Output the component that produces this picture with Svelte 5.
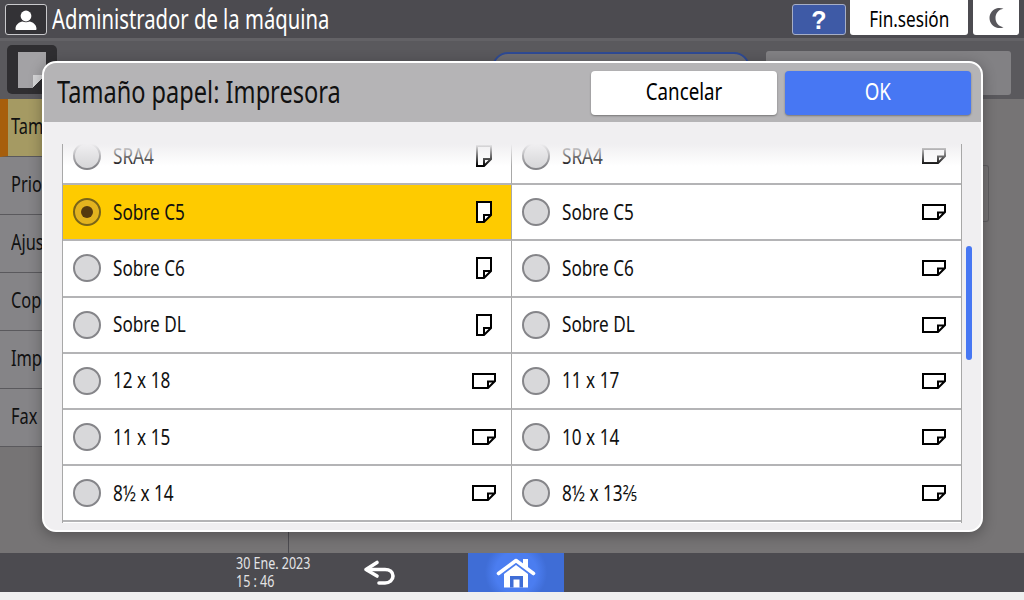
<script>
  const tabs = [
    { label: 'Tamaño papel', on: true },
    { label: 'Prioridad' },
    { label: 'Ajustes' },
    { label: 'Copiadora' },
    { label: 'Impresora' },
    { label: 'Fax' }
  ];

  // left / right columns of the paper size list, row by row
  const rows = [
    ['SRA4', 'SRA4'],
    ['Sobre C5', 'Sobre C5'],
    ['Sobre C6', 'Sobre C6'],
    ['Sobre DL', 'Sobre DL'],
    ['12 x 18', '11 x 17'],
    ['11 x 15', '10 x 14'],
    ['8½ x 14', '8½ x 13⅖']
  ];

  const isWide = (label) => !label.startsWith('S');
</script>

<div class="screen">
  <header class="topbar">
    <span class="user">
      <svg width="26" height="24" viewBox="0 0 26 24">
        <circle cx="13" cy="8" r="5.4" fill="#fff" />
        <path d="M2.5 21c0-4.6 4-7 7-7.4 1.800 1 5.200 1 7 0 3 .4 7 2.800 7 7.400 0 .6-.4 1-1 1h-19c-.6 0-1-.4-1-1z" fill="#fff" />
      </svg>
    </span>
    <span class="who nar">Administrador de la máquina</span>
    <span class="grow"></span>
    <button class="help">?</button>
    <button class="logout"><span class="nar mid">Fin.sesión</span></button>
    <button class="night" aria-label="Modo noche">
      <svg width="18" height="22" viewBox="0 0 18 22">
        <path d="M11 1C6 2 2.500 6 2.500 11S6 20 11 21c2 .3 4 0 5.500-.8C11.500 19.500 8.500 15.500 8.500 11S11.500 2.500 16.500 1.800C15 1 13 .7 11 1z" fill="#58575c" />
      </svg>
    </button>
  </header>

  <main class="content">
    <div class="title-row">
      <span class="tile"><span class="sheet"></span></span>
      <span class="title nar">Ajustes de papel bandeja</span>
      <span class="grow"></span>
      <span class="pill"><i></i><span class="nar">Comprobar estado</span></span>
      <span class="action"><span class="nar mid">Ajustes de bandeja</span></span>
    </div>
    <div class="columns">
      <nav class="tabs">
        {#each tabs as tab}
          <div class="tab" class:on={tab.on}><span class="nar">{tab.label}</span></div>
        {/each}
      </nav>
      <div class="pane"><span class="knob"></span></div>
    </div>

    <section class="dialog">
      <div class="dialog-head">
        <h1><span class="nar">Tamaño papel: Impresora</span></h1>
        <button class="cancel"><span class="nar mid">Cancelar</span></button>
        <button class="ok"><span class="nar mid">OK</span></button>
      </div>
      <div class="dialog-body">
        <div class="list">
          <div class="grid">
            {#each rows as row, r}
              {#each row as label, c}
                <div class="row" class:picked={r === 1 && c === 0}>
                  <span class="radio"></span>
                  <span class="label"><span class="nar">{label}</span></span>
                  {#if c === 1 || isWide(label)}
                    <svg class="paper" width="26" height="18" viewBox="0 0 26 18">
                      <path d="M2 2h22v7l-7 7H2z M17 16V9.500h7" fill="#fff" stroke="#000" stroke-width="2" />
                    </svg>
                  {:else}
                    <svg class="paper tall" width="18" height="24" viewBox="0 0 18 24">
                      <path d="M2 2h14v13l-7 7H2z M9 22v-7h7" fill="#fff" stroke="#000" stroke-width="2" />
                    </svg>
                  {/if}
                </div>
              {/each}
            {/each}
          </div>
          <span class="fade"></span>
        </div>
        <div class="track"><span class="thumb"></span></div>
      </div>
    </section>
  </main>

  <footer class="bottombar">
    <div class="clock"><span class="nar">30 Ene. 2023</span><br /><span class="nar">15 : 46</span></div>
    <svg class="back" width="34" height="26" viewBox="0 0 34 26">
      <path d="M14 2.500 3 9.500l11 6.500" fill="none" stroke="#fff" stroke-width="3.600" stroke-linejoin="round" stroke-linecap="round" />
      <path d="M4 9.500h18c4.500 0 8 2.500 8 6.500s-3.500 7-8 7h-6" fill="none" stroke="#fff" stroke-width="3.600" stroke-linecap="round" />
    </svg>
    <div class="home">
      <svg width="40" height="32" viewBox="0 0 40 32">
        <path d="M27 2h5v9h-5z" fill="#fff" />
        <path d="M2.500 16.500 20 3.500l17.500 13" fill="none" stroke="#fff" stroke-width="3.600" stroke-linejoin="round" stroke-linecap="round" />
        <path d="M8 17 20 8l12 9v13.500H8z" fill="#fff" />
        <path d="M14 19h13v11.500h-3.500v-8h-6v8H14z" fill="#3f6dd6" />
      </svg>
    </div>
  </footer>
  <div class="strip"></div>
</div>

<style>
  :global(body) {
    margin: 0;
    background: #efefef;
  }

  .screen {
    width: 1024px;
    height: 600px;
    display: flex;
    flex-direction: column;
    overflow: hidden;
    font-family: "Noto Sans", "Open Sans", sans-serif;
    color: #000;
  }

  button {
    font: inherit;
    border: 0;
    padding: 0;
  }

  /* the device font is a condensed one, none is installed */
  .nar {
    display: inline-block;
    transform: scaleX(0.78);
    transform-origin: left center;
    white-space: nowrap;
  }

  .nar.mid {
    transform-origin: center;
  }

  .grow {
    flex: 1;
  }

  .topbar {
    height: 38px;
    flex: none;
    display: flex;
    align-items: flex-start;
    padding: 0 5px 0 5px;
    background: #4c4b50;
    border-bottom: 3px solid #636266;
  }

  .user {
    width: 40px;
    height: 29px;
    margin-top: 4px;
    display: flex;
    align-items: center;
    justify-content: center;
    background: #333236;
    border: 1px solid #c9c9cc;
    border-radius: 3px;
  }

  .who {
    margin: 3px 0 0 5px;
    font-size: 27px;
    line-height: 32px;
    color: #fff;
    transform: scaleX(0.75);
  }

  .help {
    width: 54px;
    height: 31px;
    margin-top: 4px;
    background: #3e5aa6;
    border: 1px solid #a6aec6;
    border-radius: 3px;
    color: #fff;
    font-family: "Liberation Sans", sans-serif;
    font-size: 25px;
    font-weight: 700;
    line-height: 26px;
  }

  .logout {
    width: 118px;
    height: 35px;
    margin-left: 4px;
    background: #fff;
    border-radius: 0 0 3px 3px;
    font-size: 22px;
  }

  .night {
    width: 46px;
    height: 35px;
    margin-left: 5px;
    background: #fff;
    border-radius: 0 0 3px 3px;
    display: flex;
    align-items: center;
    justify-content: center;
  }

  .content {
    position: relative;
    flex: 1;
    min-height: 0;
    display: flex;
    flex-direction: column;
    background: #767475;
  }

  .title-row {
    height: 58px;
    flex: none;
    display: flex;
    align-items: flex-start;
    padding: 4px 13px 0 7px;
    background: #5a595d;
    box-sizing: border-box;
  }

  .tile {
    width: 50px;
    height: 49px;
    display: flex;
    align-items: flex-start;
    justify-content: center;
    background: #2f2e31;
    border-radius: 5px;
  }

  .sheet {
    position: relative;
    width: 28px;
    height: 36px;
    margin-top: 7px;
    background: #a3a2a5;
  }

  .sheet::after {
    content: '';
    position: absolute;
    right: 0;
    bottom: 0;
    width: 13px;
    height: 13px;
    background: linear-gradient(135deg, #d5d5d7 50%, #2f2e31 50%);
  }

  .title {
    margin: 10px 0 0 9px;
    font-size: 21px;
    color: #111;
  }

  .pill {
    width: 258px;
    height: 44px;
    margin-top: 7px;
    display: flex;
    gap: 8px;
    padding: 10px 12px;
    box-sizing: border-box;
    border: 2px solid #2e4a94;
    border-radius: 16px;
    background: #6f6e72;
    font-size: 19px;
    color: #111;
  }

  .pill i {
    width: 24px;
    height: 24px;
    border: 2px solid #2e4a94;
    border-radius: 50%;
  }

  .action {
    width: 245px;
    height: 44px;
    margin: 6px 0 0 16px;
    padding-top: 9px;
    box-sizing: border-box;
    text-align: center;
    background: #828184;
    border-radius: 3px;
    font-size: 19px;
    color: #111;
  }

  .columns {
    flex: 1;
    min-height: 0;
    display: flex;
  }

  .tabs {
    width: 289px;
    flex: none;
    box-sizing: border-box;
    border-right: 1px solid #4c4b50;
    background: #767475;
  }

  .tab {
    height: 58px;
    box-sizing: border-box;
    padding: 14px 0 0 11px;
    font-size: 21px;
    line-height: 26px;
    color: #111;
    background: #858487;
    border-bottom: 1px solid #5a595d;
  }

  .tab.on {
    background: #a59a63;
    border-left: 8px solid #a75e0c;
    padding-left: 3px;
  }

  .pane {
    flex: 1;
    position: relative;
  }

  .knob {
    position: absolute;
    right: 35px;
    top: 66px;
    width: 6px;
    height: 55px;
    border: 1px solid #5f5e61;
    border-left: 0;
    border-radius: 0 3px 3px 0;
  }

  .dialog {
    position: absolute;
    left: 42px;
    top: 20px;
    width: 941px;
    height: 471px;
    display: flex;
    flex-direction: column;
    box-sizing: border-box;
    border: 2px solid #fff;
    border-radius: 14px;
    overflow: hidden;
    background: #f0eff1;
    box-shadow: 0 3px 14px rgba(0, 0, 0, 0.3);
  }

  .dialog-head {
    height: 59px;
    flex: none;
    display: flex;
    align-items: flex-start;
    padding: 8px 10px 0 13px;
    box-sizing: border-box;
    background: #b5b4b6;
  }

  .dialog-head h1 {
    flex: 1;
    margin: 2px 0 0;
    font-size: 31px;
    line-height: 36px;
    font-weight: 400;
    color: #111;
  }

  .dialog-head h1 .nar {
    transform: scaleX(0.76);
  }

  .cancel,
  .ok {
    width: 186px;
    height: 44px;
    padding-bottom: 5px;
    border-radius: 4px;
    font-size: 24px;
    box-shadow: 0 1px 2px #777;
  }

  .cancel {
    background: #fff;
  }

  .ok {
    margin-left: 8px;
    background: #4777f3;
    color: #fff;
  }

  .dialog-body {
    flex: 1;
    min-height: 0;
    display: flex;
    align-items: flex-start;
    padding: 22px 0 0 18px;
  }

  .list {
    position: relative;
    width: 900px;
    height: 379px;
    flex: none;
    overflow: hidden;
    box-sizing: border-box;
    background: #fff;
    border-left: 1px solid #a8a8a8;
    border-right: 1px solid #a8a8a8;
  }

  .grid {
    display: grid;
    grid-template-columns: 448px 450px;
    grid-auto-rows: 56.200px;
    margin-top: -15px;
  }

  .row {
    display: flex;
    align-items: center;
    box-sizing: border-box;
    padding-left: 10px;
    border-bottom: 2px solid #b4b4b6;
    background: #fff;
  }

  .row:nth-child(even) {
    border-left: 1px solid #a8a8a8;
  }

  .row.picked {
    background: #fecb00;
  }

  .radio {
    width: 24px;
    height: 24px;
    flex: none;
    border: 2px solid #858589;
    border-radius: 50%;
    background: #d8d8da;
  }

  .picked .radio {
    position: relative;
    background: #e3b31f;
    border-color: #7a6518;
  }

  .picked .radio::after {
    content: '';
    position: absolute;
    left: 6px;
    top: 6px;
    width: 12px;
    height: 12px;
    border-radius: 50%;
    background: #55390e;
  }

  .label {
    flex: 1;
    margin: 0 0 3px 12px;
    font-size: 22px;
    color: #111;
  }

  .paper {
    margin-right: 14px;
  }

  .paper.tall {
    margin-right: 18px;
  }

  .fade {
    position: absolute;
    left: 0;
    right: 0;
    top: 0;
    height: 22px;
    background: linear-gradient(#f0eff1, rgba(240, 239, 241, 0));
    pointer-events: none;
  }

  .track {
    flex: 1;
    padding: 102px 0 0 4px;
  }

  .thumb {
    display: block;
    width: 6px;
    height: 114px;
    border-radius: 3px;
    background: #4777f3;
  }

  .bottombar {
    height: 39px;
    flex: none;
    display: flex;
    align-items: center;
    background: #4c4b50;
  }

  .clock {
    width: 127px;
    margin: -2px 0 0 236px;
    font-size: 16px;
    line-height: 18px;
    color: #e4e4e6;
  }

  .back {
    flex: none;
  }

  .home {
    width: 96px;
    height: 39px;
    margin-left: 71px;
    display: flex;
    align-items: center;
    justify-content: center;
    background: radial-gradient(circle at center, #4b7df0 0 40%, #3f6dd6 60%);
  }

  .strip {
    height: 8px;
    flex: none;
    background: #efefef;
  }
</style>
